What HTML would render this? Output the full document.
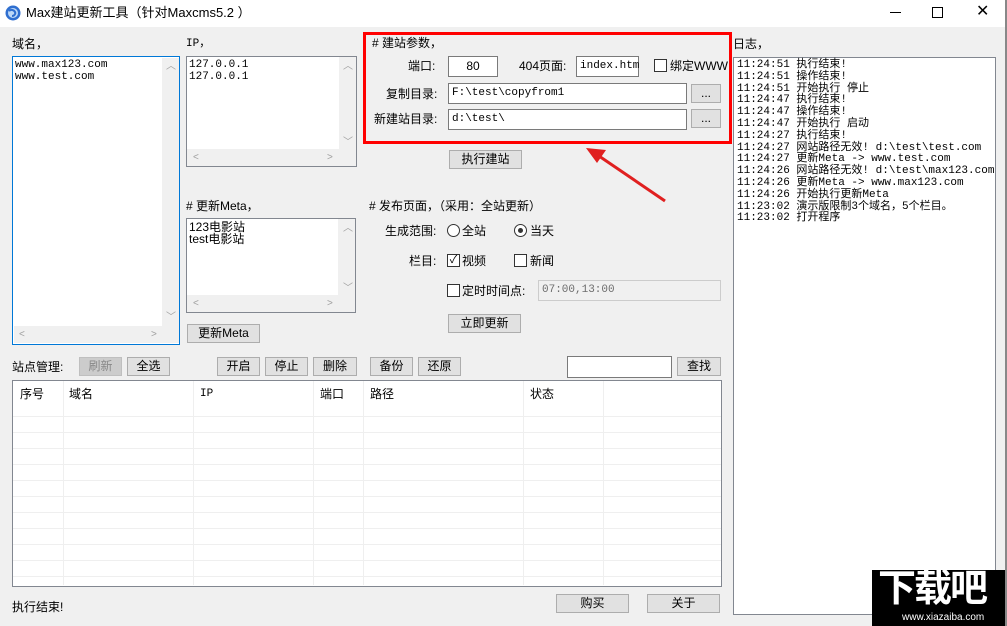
<!DOCTYPE html>
<html><head><meta charset="utf-8"><style>
*{box-sizing:border-box;margin:0;padding:0}
body{width:1007px;height:626px;background:#f0f0f0;font-family:"Liberation Sans","Noto Sans CJK SC",sans-serif;font-size:12px;color:#000;position:relative;overflow:hidden}
.a{position:absolute;white-space:nowrap;line-height:14px}
.box{position:absolute;background:#fff;border:1px solid #828790}
.btn{position:absolute;background:#e1e1e1;border:1px solid #adadad;text-align:center;line-height:16px;font-size:12px}
.inp{position:absolute;background:#fff;border:1px solid #7a7a7a;line-height:18px;padding-left:3px;font-family:"Liberation Mono","Noto Sans CJK SC",monospace;font-size:11px}
.mono{font-family:"Liberation Mono","Noto Sans CJK SC",monospace;font-size:11px;line-height:12px}
.cb{position:absolute;width:13px;height:13px;border:1px solid #333;background:#fff}
.rd{position:absolute;width:13px;height:13px;border:1px solid #333;border-radius:50%;background:#fff}
.sbv{position:absolute;background:#f0f0f0;width:17px}
.sbh{position:absolute;background:#f0f0f0;height:17px}
.ar{position:absolute;color:#a0a0a0;font-size:10px;line-height:10px}
</style></head><body>
<div style="position:absolute;left:0;top:0;width:1007px;height:27px;background:#fff"></div>
<div style="position:absolute;right:0;top:0;width:2px;height:626px;background:#888"></div>
<svg style="position:absolute;left:5px;top:5px" width="16" height="16" viewBox="0 0 16 16"><circle cx="8" cy="8" r="7.5" fill="#2f6fd0"/><circle cx="8" cy="8" r="5" fill="#bcd8f7"/><path d="M4 6c2-2 5-1 6 1s-1 4-3 4" stroke="#2f6fd0" stroke-width="2" fill="none"/></svg>
<div class="a" style="left:26px;top:5px;font-size:13px;line-height:16px">Max建站更新工具（针对Maxcms5.2 ）</div>
<div class="a" style="left:890px;top:12px;width:11px;height:1px;background:#000"></div>
<div class="a" style="left:932px;top:7px;width:11px;height:11px;border:1px solid #000"></div>
<div class="a" style="left:976px;top:2px;font-size:16px;line-height:20px">✕</div>

<div class="a" style="left:12px;top:37px">域名，</div>
<div class="box" style="left:12px;top:56px;width:168px;height:289px;border-color:#0078d7"></div>
<div class="a mono" style="left:15px;top:59px">www.max123.com<br>www.test.com</div>
<div class="sbv" style="left:162px;top:58px;height:268px"></div>
<div class="sbh" style="left:14px;top:326px;width:148px"></div>
<div class="sbh" style="left:162px;top:326px;width:17px;background:#f0f0f0"></div>
<div class="ar" style="left:166px;top:62px">︿</div><div class="ar" style="left:166px;top:313px">﹀</div>
<div class="ar" style="left:19px;top:330px">&lt;</div><div class="ar" style="left:151px;top:330px">&gt;</div>

<div class="a mono" style="left:186px;top:38px">IP，</div>
<div class="box" style="left:186px;top:56px;width:171px;height:111px"></div>
<div class="a mono" style="left:189px;top:59px">127.0.0.1<br>127.0.0.1</div>
<div class="sbv" style="left:339px;top:57px;height:93px"></div>
<div class="sbh" style="left:187px;top:149px;width:152px"></div>
<div class="sbh" style="left:339px;top:149px;width:17px;background:#f0f0f0"></div>
<div class="ar" style="left:343px;top:62px">︿</div><div class="ar" style="left:343px;top:138px">﹀</div>
<div class="ar" style="left:193px;top:153px">&lt;</div><div class="ar" style="left:327px;top:153px">&gt;</div>

<div class="a" style="left:186px;top:199px">#&nbsp;更新Meta，</div>
<div class="box" style="left:186px;top:218px;width:170px;height:95px"></div>
<div class="a" style="left:189px;top:221px;line-height:12px">123电影站<br>test电影站</div>
<div class="sbv" style="left:338px;top:219px;height:76px"></div>
<div class="sbh" style="left:187px;top:295px;width:151px"></div>
<div class="sbh" style="left:338px;top:295px;width:17px"></div>
<div class="ar" style="left:343px;top:224px">︿</div><div class="ar" style="left:343px;top:284px">﹀</div>
<div class="ar" style="left:193px;top:299px">&lt;</div><div class="ar" style="left:327px;top:299px">&gt;</div>
<div class="btn" style="left:187px;top:324px;width:73px;height:19px">更新Meta</div>

<div style="position:absolute;left:363px;top:32px;width:369px;height:112px;border:3px solid #f00"></div>
<div class="a" style="left:372px;top:36px">#&nbsp;建站参数，</div>
<div class="a" style="left:408px;top:59px">端口:</div>
<div class="inp" style="left:448px;top:56px;width:50px;height:21px;text-align:center;padding:0;font-family:'Liberation Sans';font-size:12px">80</div>
<div class="a" style="left:519px;top:59px">404页面:</div>
<div class="inp" style="left:576px;top:56px;width:63px;height:21px">index.htm</div>
<div class="cb" style="left:654px;top:59px"></div>
<div class="a" style="left:670px;top:59px">绑定WWW</div>
<div class="a" style="left:386px;top:87px">复制目录:</div>
<div class="inp" style="left:448px;top:83px;width:239px;height:21px">F:\test\copyfrom1</div>
<div class="btn" style="left:691px;top:84px;width:30px;height:19px">...</div>
<div class="a" style="left:374px;top:112px">新建站目录:</div>
<div class="inp" style="left:448px;top:109px;width:239px;height:21px">d:\test\</div>
<div class="btn" style="left:691px;top:109px;width:30px;height:19px">...</div>
<div class="btn" style="left:449px;top:150px;width:73px;height:19px">执行建站</div>
<svg style="position:absolute;left:580px;top:140px" width="95" height="70"><line x1="85" y1="61" x2="16" y2="14" stroke="#e02020" stroke-width="3"/><polygon points="6,8 26,10 17,23" fill="#e02020"/></svg>

<div class="a" style="left:369px;top:199px">#&nbsp;发布页面，（采用：全站更新）</div>
<div class="a" style="left:385px;top:224px">生成范围:</div>
<div class="rd" style="left:447px;top:224px"></div><div class="a" style="left:462px;top:224px">全站</div>
<div class="rd" style="left:514px;top:224px"><div style="position:absolute;left:3px;top:3px;width:5px;height:5px;border-radius:50%;background:#333"></div></div><div class="a" style="left:530px;top:224px">当天</div>
<div class="a" style="left:409px;top:254px">栏目:</div>
<div class="cb" style="left:447px;top:254px;font-size:11px;line-height:11px;text-align:center">✓</div><div class="a" style="left:462px;top:254px">视频</div>
<div class="cb" style="left:514px;top:254px"></div><div class="a" style="left:530px;top:254px">新闻</div>
<div class="cb" style="left:447px;top:284px"></div><div class="a" style="left:462px;top:284px">定时时间点:</div>
<div class="inp" style="left:538px;top:280px;width:183px;height:21px;background:#f0f0f0;border-color:#ccc;color:#6d6d6d">07:00,13:00</div>
<div class="btn" style="left:448px;top:314px;width:73px;height:19px">立即更新</div>

<div class="a" style="left:733px;top:37px">日志，</div>
<div class="box" style="left:733px;top:57px;width:263px;height:558px"></div>
<div class="a mono" style="left:737px;top:60px;line-height:11.8px">11:24:51 执行结束!<br>11:24:51 操作结束!<br>11:24:51 开始执行 停止<br>11:24:47 执行结束!<br>11:24:47 操作结束!<br>11:24:47 开始执行 启动<br>11:24:27 执行结束!<br>11:24:27 网站路径无效! d:\test\test.com<br>11:24:27 更新Meta -&gt; www.test.com<br>11:24:26 网站路径无效! d:\test\max123.com<br>11:24:26 更新Meta -&gt; www.max123.com<br>11:24:26 开始执行更新Meta<br>11:23:02 演示版限制3个域名，5个栏目。<br>11:23:02 打开程序</div>

<div class="a" style="left:12px;top:360px">站点管理:</div>
<div class="btn" style="left:79px;top:357px;width:43px;height:19px;background:#ccc;color:#888;border-color:#bfbfbf">刷新</div>
<div class="btn" style="left:127px;top:357px;width:43px;height:19px">全选</div>
<div class="btn" style="left:217px;top:357px;width:43px;height:19px">开启</div>
<div class="btn" style="left:265px;top:357px;width:43px;height:19px">停止</div>
<div class="btn" style="left:313px;top:357px;width:44px;height:19px">删除</div>
<div class="btn" style="left:370px;top:357px;width:43px;height:19px">备份</div>
<div class="btn" style="left:418px;top:357px;width:43px;height:19px">还原</div>
<div class="inp" style="left:567px;top:356px;width:105px;height:22px"></div>
<div class="btn" style="left:677px;top:357px;width:44px;height:19px">查找</div>

<div class="box" style="left:12px;top:380px;width:710px;height:207px;background-color:#fff;background-image:repeating-linear-gradient(to bottom,transparent 0,transparent 15px,#efefef 15px,#efefef 16px);background-position:0 20px;background-repeat:no-repeat;background-size:100% 185px"></div>
<div style="position:absolute;left:13px;top:381px;width:708px;height:24px;background:#fff"></div>
<svg style="position:absolute;left:12px;top:380px" width="710" height="207"><g stroke="#efefef"><line x1="51.5" y1="1" x2="51.5" y2="205"/><line x1="181.5" y1="1" x2="181.5" y2="205"/><line x1="301.5" y1="1" x2="301.5" y2="205"/><line x1="351.5" y1="1" x2="351.5" y2="205"/><line x1="511.5" y1="1" x2="511.5" y2="205"/><line x1="591.5" y1="1" x2="591.5" y2="205"/></g></svg>
<div class="a" style="left:20px;top:387px">序号</div>
<div class="a" style="left:69px;top:387px">域名</div>
<div class="a mono" style="left:200px;top:388px">IP</div>
<div class="a" style="left:320px;top:387px">端口</div>
<div class="a" style="left:370px;top:387px">路径</div>
<div class="a" style="left:530px;top:387px">状态</div>

<div class="a" style="left:12px;top:600px">执行结束!</div>
<div class="btn" style="left:556px;top:594px;width:73px;height:19px">购买</div>
<div class="btn" style="left:647px;top:594px;width:73px;height:19px">关于</div>

<div style="position:absolute;left:872px;top:570px;width:133px;height:56px;background:#000"></div>
<div class="a" style="left:878px;top:568px;color:#fff;font-size:38px;line-height:42px;font-weight:bold;letter-spacing:-2px">下载吧</div>
<div class="a" style="left:902px;top:612px;color:#fff;font-size:10px;line-height:12px">www.xiazaiba.com</div>
</body></html>
